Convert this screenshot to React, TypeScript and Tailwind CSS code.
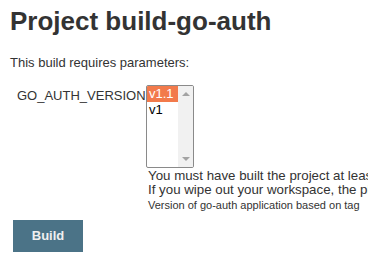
import React from 'react';

const options = [
  { value: 'v1.1', selected: true },
  { value: 'v1', selected: false },
];

function ListBox() {
  return (
    <div className="flex w-[48px] h-[83px] border border-[#8a8a8a] rounded-[2px] bg-white overflow-hidden">
      <div className="flex-1 flex flex-col">
        {options.map((o) => (
          <div
            key={o.value}
            className={`h-[16px] pl-[2px] text-[13px] leading-[16px] ${
              o.selected ? 'bg-[#f27a4b] text-white' : 'text-black'
            }`}
          >
            {o.value}
          </div>
        ))}
      </div>
      <div className="w-[15px] bg-[#f1f1f1] flex flex-col justify-between items-center py-[6px]">
        <div className="w-0 h-0 border-l-[4px] border-r-[4px] border-b-[4px] border-l-transparent border-r-transparent border-b-[#a3a3a3]" />
        <div className="w-0 h-0 border-l-[4px] border-r-[4px] border-t-[4px] border-l-transparent border-r-transparent border-t-[#a3a3a3]" />
      </div>
    </div>
  );
}

export default function App() {
  return (
    <div
      className="w-[368px] h-[274px] overflow-hidden bg-white text-[#333] pl-[10px]"
      style={{ fontFamily: '"Liberation Sans", Arial, sans-serif' }}
    >
      <h1 className="pt-[6px] text-[26px] leading-[30px] font-bold whitespace-nowrap">
        Project build-go-auth
      </h1>
      <p className="mt-[19px] text-[13px] leading-[16px]">This build requires parameters:</p>

      <div className="mt-[14px] flex">
        <div className="w-[136px] pl-[7px] pt-[3px] text-[13px] leading-[16px]">GO_AUTH_VERSION</div>
        <div className="flex flex-col w-[222px] overflow-hidden">
          <ListBox />
          <div className="pl-[2px] whitespace-nowrap text-[13.3px] leading-[14px]">
            <div className="pt-[1px]">You must have built the project at least once.</div>
            <div>If you wipe out your workspace, the plugin needs to rebuild.</div>
            <div className="text-[11px] leading-[14px] pt-[1px]">Version of go-auth application based on tag</div>
          </div>
        </div>
      </div>

      <button className="mt-[8px] ml-[3px] w-[70px] h-[32px] bg-[#4b7387] text-[#f0f0f0] text-[13px] font-bold">
        Build
      </button>
    </div>
  );
}
